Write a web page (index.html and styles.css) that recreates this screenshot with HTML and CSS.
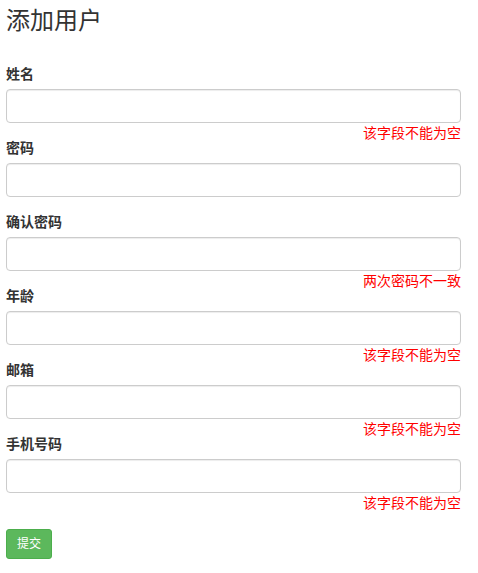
FILE: index.html
```html
<!DOCTYPE html>
<html lang="zh">
<head>
<meta charset="utf-8">
<title>添加用户</title>
<link rel="stylesheet" href="styles.css">
</head>
<body>
<div class="page">
  <h3 class="title">添加用户</h3>
  <form class="form">
    <div class="group">
      <label class="label">姓名</label>
      <input class="input" type="text">
      <div class="error">该字段不能为空</div>
    </div>
    <div class="group">
      <label class="label">密码</label>
      <input class="input" type="password">
    </div>
    <div class="group">
      <label class="label">确认密码</label>
      <input class="input" type="password">
      <div class="error">两次密码不一致</div>
    </div>
    <div class="group">
      <label class="label">年龄</label>
      <input class="input" type="text">
      <div class="error">该字段不能为空</div>
    </div>
    <div class="group">
      <label class="label">邮箱</label>
      <input class="input" type="text">
      <div class="error">该字段不能为空</div>
    </div>
    <div class="group">
      <label class="label">手机号码</label>
      <input class="input" type="text">
      <div class="error">该字段不能为空</div>
    </div>
    <button class="btn" type="button">提交</button>
  </form>
</div>
</body>
</html>
```
FILE: styles.css
```css
* { box-sizing: border-box; }
html, body { margin: 0; padding: 0; background: #fff; }
body {
  font-family: "Liberation Sans", Arial, "Noto Sans CJK SC", sans-serif;
  font-size: 14px;
  line-height: 20px;
  color: #333;
}
.page {
  padding: 0 17px 0 6px;
}
.title {
  margin: 8px 0 30px;
  font-size: 24px;
  line-height: 26px;
  font-weight: 400;
}
.form { margin: 0; }
.group {
  margin-bottom: 15px;
}
.label {
  display: block;
  margin-bottom: 5px;
  font-weight: 700;
  line-height: 20px;
}
.input {
  display: block;
  width: 100%;
  height: 34px;
  padding: 6px 12px;
  font-size: 14px;
  border: 1px solid #ccc;
  border-radius: 4px;
  box-shadow: inset 0 1px 1px rgba(0,0,0,.075);
  background: #fff;
  outline: none;
}
.error {
  height: 0;
  overflow: visible;
  text-align: right;
  color: #f00;
  line-height: 20px;
  font-size: 14px;
  margin-top: 0;
}
.btn {
  display: block;
  margin-top: 36px;
  height: 30px;
  padding: 5px 10px;
  font-family: inherit;
  font-size: 12px;
  line-height: 18px;
  color: #fff;
  background: #5cb85c;
  border: 1px solid #4cae4c;
  border-radius: 3px;
  cursor: pointer;
}
```
